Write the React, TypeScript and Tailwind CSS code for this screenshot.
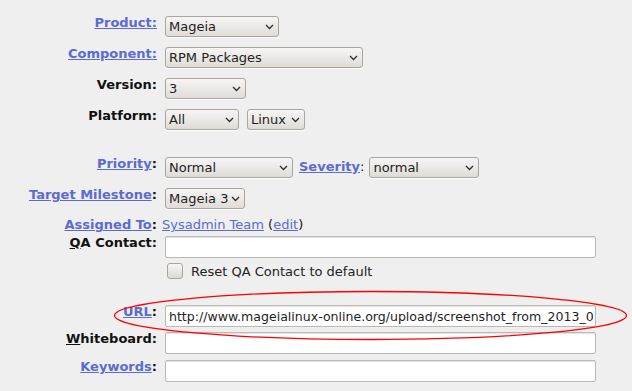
import React from "react";

const linkCls = "text-[#5b6bd4] underline";

function Chevron() {
    return (
        <svg width="9" height="6" viewBox="0 0 9 6" className="shrink-0">
            <path d="M1 1 L4.5 4.5 L8 1" fill="none" stroke="#2e2e2e" strokeWidth="1.3" />
        </svg>
    );
}

function Select({ value, width }: { value: string; width: string }) {
    return (
        <div className={`${width} h-[21px] flex items-center justify-between pl-[3px] pr-[4px] rounded-[3px] border border-[#a9a6a1] bg-gradient-to-b from-[#f7f6f5] to-[#dfdcd8] shadow-[0_1px_0_#ffffff] text-[#1e1e1e] leading-[19px]`}>
            <span className="whitespace-nowrap overflow-hidden">{value}</span>
            <Chevron />
        </div>
    );
}

function TextBox({ value }: { value?: string }) {
    return (
        <div className="w-[431px] h-[22px] flex items-center pl-[3px] rounded-[2px] border border-[#bcb9b4] bg-white shadow-[inset_0_1px_1px_rgba(0,0,0,0.12)] text-[#1e1e1e] text-[12.55px] leading-[19px] overflow-hidden whitespace-nowrap">
            {value}
        </div>
    );
}

function Row({ label, mt, children }: { label: React.ReactNode; mt: string; children?: React.ReactNode }) {
    return (
        <div className={`flex items-start ${mt}`}>
            <div className="w-[157px] shrink-0 text-right font-bold leading-[15px] -mt-[1px] whitespace-nowrap">{label}</div>
            <div className="ml-[8px] flex items-center">{children}</div>
        </div>
    );
}

export default function App() {
    return (
        <div className="relative w-[632px] h-[391px] overflow-hidden bg-[#efefef] text-[13px] text-[#111] font-['DejaVu_Sans',sans-serif]">
            <div className="flex flex-col pt-[16px]">
                <Row label={<a className={linkCls}>Product:</a>} mt="mt-0">
                    <Select value="Mageia" width="w-[114px]" />
                </Row>
                <Row label={<a className={linkCls}>Component:</a>} mt="mt-[10px]">
                    <Select value="RPM Packages" width="w-[198px]" />
                </Row>
                <Row label="Version:" mt="mt-[10px]">
                    <Select value="3" width="w-[81px]" />
                </Row>
                <Row label="Platform:" mt="mt-[10px]">
                    <div className="flex gap-[8px]">
                        <Select value="All" width="w-[74px]" />
                        <Select value="Linux" width="w-[58px]" />
                    </div>
                </Row>
                <Row label={<><a className={linkCls}>Priority</a>:</>} mt="mt-[27px]">
                    <Select value="Normal" width="w-[128px]" />
                    <span className="ml-[6px] font-bold -mt-[1px]"><a className={linkCls}>Severity</a><span className="font-normal">:</span></span>
                    <span className="ml-[5px]"><Select value="normal" width="w-[110px]" /></span>
                </Row>
                <Row label={<><a className={linkCls}>Target Milestone</a>:</>} mt="mt-[10px]">
                    <Select value="Mageia 3" width="w-[80px]" />
                </Row>
                <div className="flex items-start mt-[8px] h-[17px]">
                    <div className="w-[157px] shrink-0 text-right font-bold leading-[15px]"><a className={linkCls}>Assigned To</a>:</div>
                    <div className="ml-[5px] leading-[15px]"><a className={linkCls}>Sysadmin Team</a> (<a className={linkCls}>edit</a>)</div>
                </div>
                <Row label={<><span className="underline">Q</span>A Contact:</>} mt="mt-[2px]">
                    <TextBox />
                </Row>
                <div className="flex items-center mt-[4px] ml-[167px] h-[17px]">
                    <div className="w-[16px] h-[16px] rounded-[3px] border border-[#a9a6a1] bg-gradient-to-b from-[#f7f6f5] to-[#dcd9d5]" />
                    <span className="ml-[8px] text-[#222] mt-[2px]">Reset QA Contact to default</span>
                </div>
                <Row label={<><a className={linkCls}>URL</a>:</>} mt="mt-[26px]">
                    <TextBox value="http://www.mageialinux-online.org/upload/screenshot_from_2013_0" />
                </Row>
                <Row label={<><span className="underline">W</span>hiteboard:</>} mt="mt-[5px]">
                    <TextBox />
                </Row>
                <Row label={<><a className={linkCls}>Keywords</a>:</>} mt="mt-[6px]">
                    <TextBox />
                </Row>
            </div>
            <svg className="absolute left-0 top-0 pointer-events-none" width="632" height="391">
                <ellipse cx="370.5" cy="315.5" rx="256" ry="24" fill="none" stroke="#ff0000" strokeWidth="1.3" />
            </svg>
        </div>
    );
}
